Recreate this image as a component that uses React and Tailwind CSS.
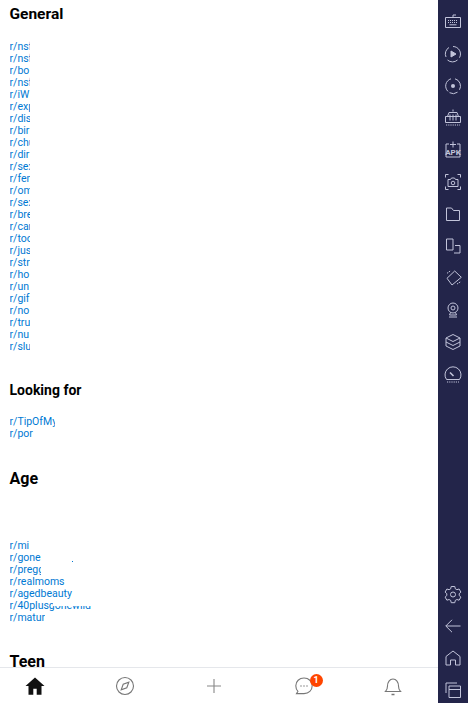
const general = ['r/nsf', 'r/nsf', 'r/bo', 'r/nsf', 'r/iW', 'r/exp', 'r/dis', 'r/bir', 'r/chu', 'r/dir', 'r/sex', 'r/fem', 'r/om', 'r/sex', 'r/bre', 'r/car', 'r/too', 'r/jus', 'r/str', 'r/ho', 'r/un', 'r/gif', 'r/no', 'r/tru', 'r/nu', 'r/slu']

function Link({ children, className = 'w-[20.5px]' }) {
  return (
    <div className={`h-3 ml-[9.5px] overflow-hidden whitespace-nowrap text-[10.5px] leading-3 text-[#0079d3] ${className}`}>
      {children}
    </div>
  )
}

function Heading({ children, className = 'text-[15px]' }) {
  return <h2 className={`ml-[9.5px] leading-6 font-bold text-black whitespace-nowrap ${className}`}>{children}</h2>
}

function SideIcon({ children }) {
  return (
    <svg width="20" height="20" viewBox="0 0 20 20" fill="none" stroke="#c2c4da" strokeWidth="1" className="block">
      {children}
    </svg>
  )
}

const topIcons = [
  // keyboard
  <>
    <path d="M2.500 5.500h15v10h-15zM10 5.500V3h3" />
    <path d="M5 8.500h10M5 10.500h10" strokeDasharray="1 1" />
    <path d="M6.500 12.800h7" />
  </>,
  // play in dashed ring
  <>
    <path d="M10 2.500a7.500 7.500 0 0 1 6.500 11.200M14.500 16a7.500 7.500 0 0 1-10 0M3 13a7.500 7.500 0 0 1 3-9.500" />
    <path d="M8 7l5 3-5 3z" fill="#c2c4da" />
  </>,
  // dot in ring
  <>
    <path d="M8 2.800a7.500 7.500 0 0 0-3 12.600M12 2.800a7.500 7.500 0 0 1 4.500 11M6.500 16.700a7.500 7.500 0 0 0 8-.5" />
    <circle cx="10" cy="10" r="2" fill="#c2c4da" stroke="none" />
  </>,
  // app store
  <>
    <path d="M10 1.500v2M4.500 8.500L6 4.500h8l1.500 4" />
    <path d="M2.500 8.500h15v6h-15zM7 6.500v6M10 6.500v6M13 6.500v6" />
    <path d="M3 17h14" strokeDasharray="1.200 1" />
  </>,
  // apk
  <>
    <path d="M6 4H3v13h14V4h-3M10 1.500v6M7 4.500h6" />
    <text x="10" y="14.800" textAnchor="middle" fill="#c2c4da" stroke="none" fontSize="8" fontWeight="700" fontFamily="Roboto, sans-serif">APK</text>
  </>,
  // screenshot
  <>
    <path d="M2.500 5.500v-3h3M14.500 2.500h3v3M2.500 14.500v3h3M14.500 17.500h3v-3" />
    <path d="M5 7.500h2.500l1-1.500h3l1 1.500H15v7H5z" />
    <circle cx="10" cy="11" r="1.800" />
  </>,
  // folder
  <path d="M3.500 4h5l2 2.500h6v10h-13z" />,
  // split screen
  <>
    <path d="M3.500 3h6.500v11H3.500z" />
    <path d="M12 9.500h5V17h-6" />
  </>,
  // rotate
  <>
    <path d="M11.700 3l6.600 6.300L9 17l-5-6.700z" />
    <path d="M4 5.300l3.700-2.600M14 16l3.700-2.300" strokeDasharray="1.500 .8" />
  </>,
  // webcam
  <>
    <circle cx="10" cy="8" r="5" />
    <circle cx="10" cy="8" r="2" />
    <path d="M7.500 12.500l-1 2.500h7l-1-2.500M6 17h8" />
  </>,
  // layers
  <>
    <path d="M10 2.500l7 3.500v8l-7 3.500-7-3.500V6z" />
    <path d="M3 6l7 3.500L17 6M3 10l7 3.500 7-3.500" />
  </>,
  // speed
  <>
    <path d="M3.500 15.500a8 8 0 1 1 13 0z" />
    <path d="M7 8.500l3.500 3.500" strokeWidth="1.600" />
    <path d="M4 18h12" strokeDasharray="1.200 1" />
  </>,
]

const bottomIcons = [
  // settings
  <>
    <path d="M8.200 2.500h3.600l.5 2.300 1.600.9 2.200-.7 1.800 3.100-1.700 1.600v1.800l1.700 1.600-1.800 3.100-2.200-.7-1.600.9-.5 2.300H8.200l-.5-2.300-1.600-.9-2.200.7-1.800-3.100 1.700-1.600V9.700L2.100 8.100l1.800-3.100 2.200.7 1.600-.9z" />
    <circle cx="10" cy="10.500" r="2.500" />
  </>,
  // back
  <path d="M17.500 10H2.800M9 3.800L2.800 10 9 16.200" />,
  // home
  <path d="M3 17V8.500L10 3l7 5.500V17h-4.500v-5h-5v5z" />,
  // recents
  <>
    <path d="M3 13V3h11" />
    <path d="M6 6h11.500v11.500H6zM6 9.500h11.500" />
  </>,
]

function BottomNav() {
  return (
    <div className="h-9 shrink-0 flex items-center justify-between border-t border-gray-200 bg-white pl-[23px] pr-[33px]">
      <svg width="24" height="24" viewBox="0 0 24 24" fill="#111">
        <path d="M12 3.500L2.500 12H5.500v8.800h4.800v-6h3.400v6h4.800V12h3z" />
      </svg>
      <svg width="24" height="24" viewBox="0 0 24 24" fill="none" stroke="#777" strokeWidth="1.100">
        <circle cx="12" cy="12" r="8.500" />
        <path d="M15.800 8.200l-2 5.600-5.600 2 2-5.600z" />
      </svg>
      <svg width="24" height="24" viewBox="0 0 24 24" fill="none" stroke="#888" strokeWidth="1.100">
        <path d="M12 5v14M5 12h14" />
      </svg>
      <div className="relative w-6 h-6">
        <svg width="24" height="24" viewBox="0 0 24 24" fill="none" stroke="#777" strokeWidth="1.100">
          <path d="M12 4c4.700 0 8.200 3.400 8.200 7.800s-3.500 7.800-8.200 7.800H4.500l1.400-2.300C4.600 15.900 3.800 14 3.800 11.800 3.800 7.400 7.300 4 12 4z" />
          <path d="M8.500 12h1M11.500 12h1M14.500 12h1" strokeWidth="1.400" />
        </svg>
        <span className="absolute top-0 left-[18px] w-[13px] h-[13px] rounded-full bg-[#ff4500] text-white text-[9px] leading-[13px] font-bold text-center">1</span>
      </div>
      <svg width="24" height="24" viewBox="0 0 24 24" fill="none" stroke="#777" strokeWidth="1.100">
        <path d="M4.500 17.500c1.500-1.500 2-2.500 2-5.500 0-3.800 2.200-7 5.500-7s5.500 3.200 5.500 7c0 3 .5 4 2 5.500z" />
        <path d="M10.500 20.500h3" strokeWidth="1.500" />
      </svg>
    </div>
  )
}

export default function App() {
  return (
    <div className="flex h-[703px] w-[468px] overflow-hidden bg-white font-['Roboto',sans-serif]">
      <div className="flex-1 min-w-0 flex flex-col">
        <div className="flex-1 min-h-0 overflow-hidden pt-0.5">
          <Heading className="text-[15.5px]">General</Heading>
          <div className="mt-[15px]">
            {general.map((g, i) => <Link key={i}>{g}</Link>)}
          </div>

          <Heading className="mt-[25px] text-sm">Looking for</Heading>
          <div className="mt-3.5">
            <Link className="w-[45.5px]">r/TipOfMy</Link>
            <Link className="w-auto">r/por</Link>
          </div>

          <Heading className="mt-[27px]">Age</Heading>
          <div className="mt-[49px]">
            <Link>r/mi</Link>
            <div className="relative">
              <Link className="w-[31px]">r/gone</Link>
              <div className="absolute left-[72px] top-[9px] w-px h-px bg-[#0079d3]" />
            </div>
            <Link className="w-[31px]">r/pregg</Link>
            <Link className="w-auto">r/realmoms</Link>
            <Link className="w-auto">r/agedbeauty</Link>
            <div className="relative">
              <Link className="w-auto">r/40plusgonewild</Link>
              <div className="absolute left-[53px] top-0 w-10 h-1.5 bg-white" />
            </div>
            <Link className="w-[35px]">r/matur</Link>
          </div>

          <Heading className="mt-[26px]">Teen</Heading>
        </div>
        <BottomNav />
      </div>

      <div className="w-[30px] shrink-0 bg-[#23254a] flex flex-col items-center justify-between pt-3 pb-[3px]">
        <div className="flex flex-col gap-3">
          {topIcons.map((icon, i) => <SideIcon key={i}>{icon}</SideIcon>)}
        </div>
        <div className="flex flex-col gap-3">
          {bottomIcons.map((icon, i) => <SideIcon key={i}>{icon}</SideIcon>)}
        </div>
      </div>
    </div>
  )
}
